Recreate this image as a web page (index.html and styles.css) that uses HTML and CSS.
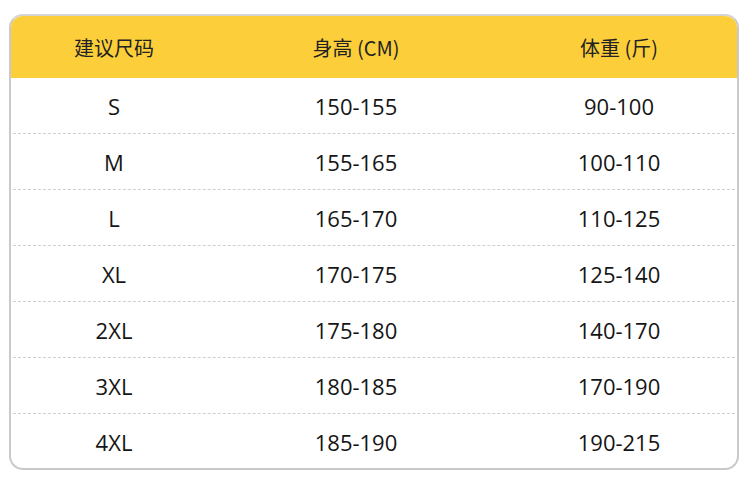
FILE: index.html
```html
<!DOCTYPE html>
<html lang="zh">
<head>
<meta charset="utf-8">
<link rel="stylesheet" href="styles.css">
</head>
<body>
<div class="card">
  <div class="row head">
    <div class="cell">建议尺码</div>
    <div class="cell">身高 (CM)</div>
    <div class="cell">体重 (斤)</div>
  </div>
  <div class="row"><div class="cell">S</div><div class="cell">150-155</div><div class="cell">90-100</div></div>
  <div class="row"><div class="cell">M</div><div class="cell">155-165</div><div class="cell">100-110</div></div>
  <div class="row"><div class="cell">L</div><div class="cell">165-170</div><div class="cell">110-125</div></div>
  <div class="row"><div class="cell">XL</div><div class="cell">170-175</div><div class="cell">125-140</div></div>
  <div class="row"><div class="cell">2XL</div><div class="cell">175-180</div><div class="cell">140-170</div></div>
  <div class="row"><div class="cell">3XL</div><div class="cell">180-185</div><div class="cell">170-190</div></div>
  <div class="row last"><div class="cell">4XL</div><div class="cell">185-190</div><div class="cell">190-215</div></div>
</div>
</body>
</html>
```
FILE: styles.css
```css
html, body {
  margin: 0;
  padding: 0;
  background: #ffffff;
}
body {
  padding: 14px 0 0 9px;
  font-family: "Open Sans", "Noto Sans CJK SC", sans-serif;
  color: #151515;
}
.card {
  width: 730px;
  height: 456px;
  border: 2px solid #c9c9c9;
  border-top-color: #d4d4d4;
  border-radius: 14px;
  overflow: hidden;
  box-sizing: border-box;
}
.row {
  display: grid;
  grid-template-columns: 202px 282px 1fr;
  height: 56px;
  align-items: center;
  margin: 0 2px;
  border-bottom: 1px dashed #cfcfcf;
  box-sizing: border-box;
}
.row.last {
  border-bottom: none;
}
.row.head {
  margin: 0;
  height: 62px;
  background: #fccf3a;
  border-bottom: none;
  padding: 0 2px;
  font-family: "Noto Sans CJK SC", sans-serif;
  color: #222;
}
.cell {
  text-align: center;
  font-size: 22px;
}
.cell:last-child {
  padding-left: 6px;
}
.row.head .cell {
  font-size: 20px;
  padding-top: 1px;
}
```
